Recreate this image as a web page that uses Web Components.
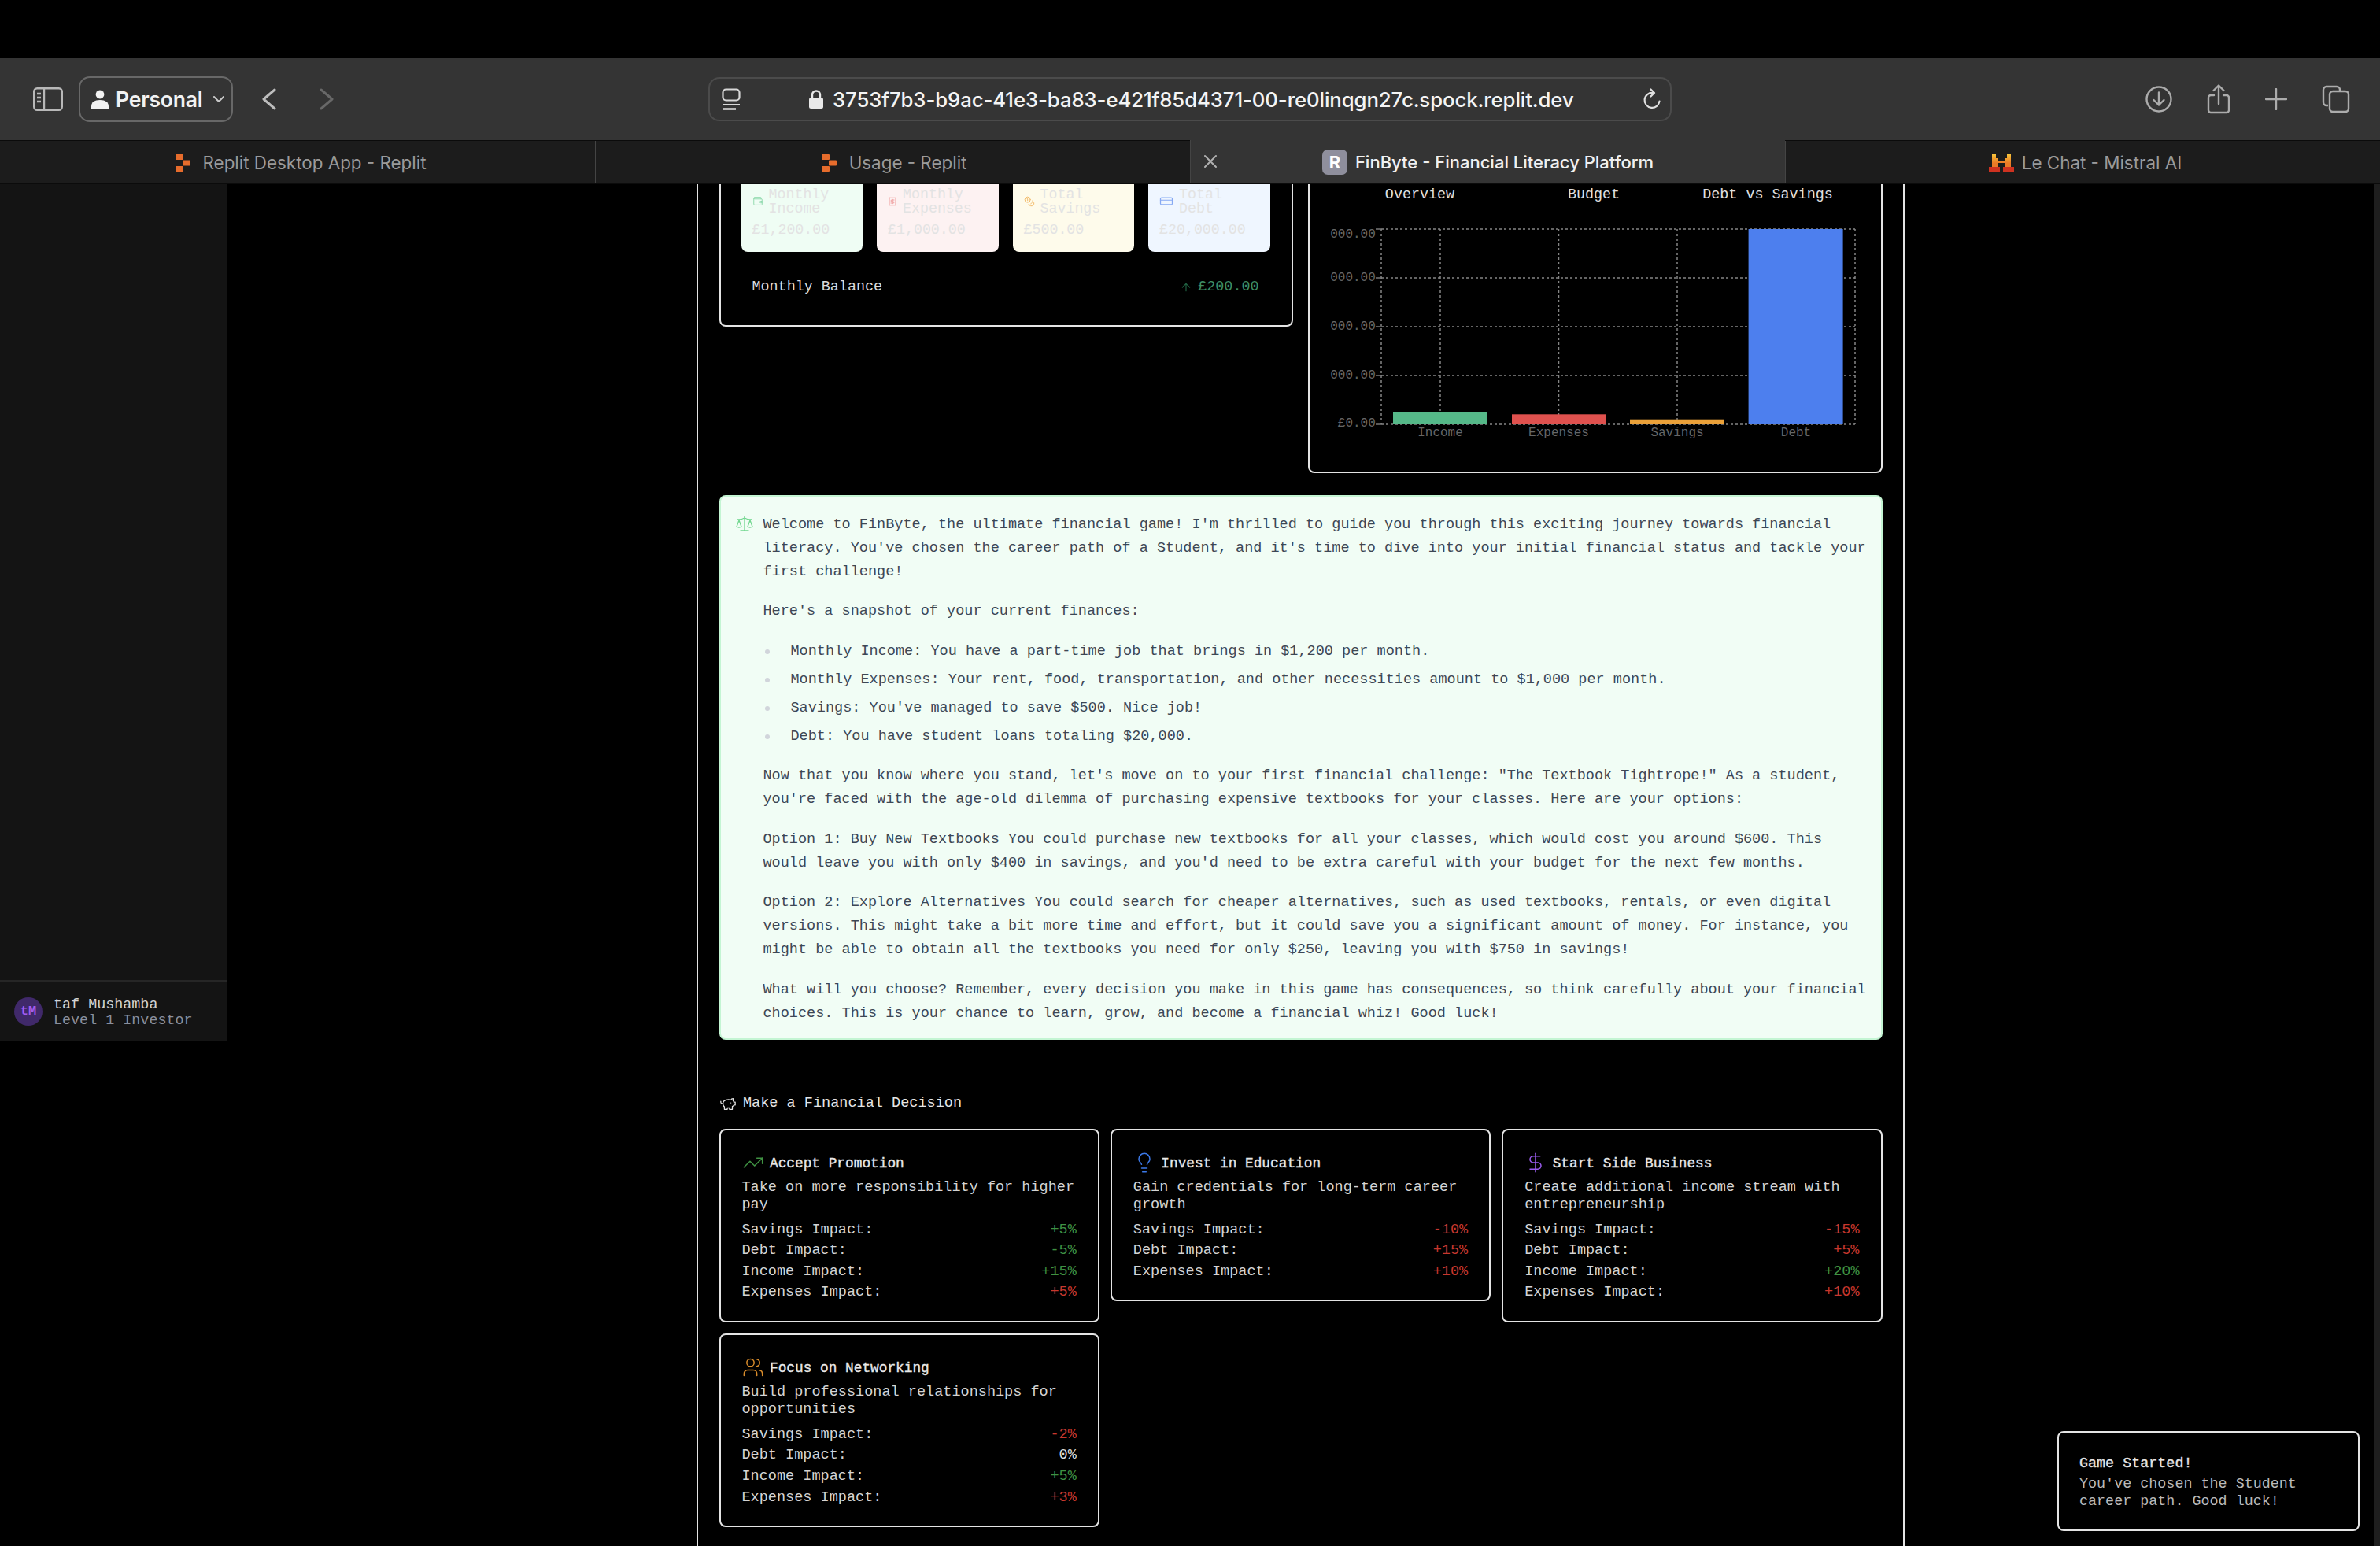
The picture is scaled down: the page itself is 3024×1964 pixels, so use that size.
<!DOCTYPE html>
<html><head><meta charset="utf-8"><style>
html,body{margin:0;padding:0;background:#000;width:3024px;height:1964px;overflow:hidden}
body{display:flex;flex-direction:column;font-family:"Liberation Mono",monospace}
</style></head><body>
<browser-chrome></browser-chrome>
<app-shell>
  <game-sidebar slot="side"></game-sidebar>
  <finance-summary></finance-summary>
  <finance-chart></finance-chart>
  <advisor-message slot="msg"></advisor-message>
  <decision-panel slot="dec"></decision-panel>
  <game-toast slot="toast"></game-toast>
</app-shell>
<script>
const ic=(body,w,h,color,sw,extra='')=>`<svg width="${w}" height="${h}" viewBox="0 0 24 24" fill="none" stroke="${color}" stroke-width="${sw}" stroke-linecap="round" stroke-linejoin="round" preserveAspectRatio="none" style="flex:none;display:block;${extra}">${body}</svg>`;
const I={
scale:'<path d="m16 16 3-8 3 8c-.87.65-1.92 1-3 1s-2.13-.35-3-1Z"/><path d="m2 16 3-8 3 8c-.87.65-1.92 1-3 1s-2.13-.35-3-1Z"/><path d="M7 21h10"/><path d="M12 3v18"/><path d="M3 7h2c2 0 5-1 7-2 2 1 5 2 7 2h2"/>',
trend:'<polyline points="22 7 13.5 15.5 8.5 10.5 2 17"/><polyline points="16 7 22 7 22 13"/>',
bulb:'<path d="M15 14c.2-1 .7-1.7 1.5-2.5 1-.9 1.5-2.2 1.5-3.5A6 6 0 0 0 6 8c0 1 .2 2.2 1.5 3.5.7.7 1.3 1.5 1.5 2.5"/><path d="M9 18h6"/><path d="M10 22h4"/>',
dollar:'<line x1="12" y1="2" x2="12" y2="22"/><path d="M17 5H9.5a3.5 3.5 0 0 0 0 7h5a3.5 3.5 0 0 1 0 7H6"/>',
users:'<path d="M16 21v-2a4 4 0 0 0-4-4H6a4 4 0 0 0-4 4v2"/><circle cx="9" cy="7" r="4"/><path d="M22 21v-2a4 4 0 0 0-3-3.87"/><path d="M16 3.13a4 4 0 0 1 0 7.75"/>',
pig:'<path d="M19 5c-1.5 0-2.8 1.4-3 2-3.5-1.5-11-.3-11 5 0 1.8 0 3 2 4.5V20h4v-2h3v2h4v-4c1-.5 1.7-1 2-2h2v-4h-2c0-1-.5-1.5-1-2V5z"/><path d="M2 9v1c0 1.1.9 2 2 2h1"/><path d="M16 11h.01"/>',
wallet:'<path d="M19 7V4a1 1 0 0 0-1-1H5a2 2 0 0 0 0 4h15a1 1 0 0 1 1 1v4h-3a2 2 0 0 0 0 4h3a1 1 0 0 0 1-1v-2a1 1 0 0 0-1-1"/><path d="M3 5v14a2 2 0 0 0 2 2h15a1 1 0 0 0 1-1v-4"/>',
receipt:'<path d="M4 2v20l2-1 2 1 2-1 2 1 2-1 2 1 2-1 2 1V2l-2 1-2-1-2 1-2-1-2 1-2-1-2 1Z"/><path d="M16 8h-6a2 2 0 1 0 0 4h4a2 2 0 1 1 0 4H8"/><path d="M12 17.5v-11"/>',
coins:'<circle cx="8" cy="8" r="6"/><path d="M18.09 10.37A6 6 0 1 1 10.34 18"/><path d="M7 6h1v4"/><path d="m16.71 13.88.7.71-2.82 2.82"/>',
card:'<rect x="2" y="5" width="20" height="14" rx="2"/><line x1="2" y1="10" x2="22" y2="10"/>',
arrow:'<path d="M12 19V5"/><path d="m5 12 7-7 7 7"/>'
};
function def(name,css,html){
  customElements.define(name,class extends HTMLElement{
    constructor(){super();const r=this.attachShadow({mode:'open'});r.innerHTML=`<style>${css}</style>${html}`;}
  });
}
const replit=`<svg width="19" height="22" viewBox="0 0 19 22" style="flex:none"><g fill="#e66c2c"><rect width="10" height="7" rx="1"/><rect x="9" y="7.5" width="10" height="7" rx="1"/><rect y="15" width="10" height="7" rx="1"/></g></svg>`;
const mistral=`<svg width="32" height="22" viewBox="0 0 32 22" style="flex:none"><defs><linearGradient id="mg" x1="0" y1="0" x2="0" y2="1"><stop offset="0" stop-color="#f6c43a"/><stop offset=".7" stop-color="#ec7a26"/></linearGradient></defs><path fill="url(#mg)" d="M4 0h5v5h3v3h8V5h3V0h5v16h-8v-5h-8v5H4z"/><rect y="16" width="14" height="6" fill="#cf3220"/><rect x="18" y="16" width="14" height="6" fill="#cf3220"/></svg>`;

def('browser-chrome',`
:host{display:block;flex:none;font-family:Inter,"Liberation Sans",sans-serif}
.top{height:74px;background:#000}
.bar{height:104px;background:#343434;display:flex;align-items:center;box-sizing:border-box}
.side{margin-left:42px}
.prof{margin-left:20px;width:196px;height:58px;box-sizing:border-box;border:2px solid #686868;border-radius:14px;display:flex;align-items:center;padding-left:14px;color:#f2f2f2;font-weight:600;font-size:26.5px;letter-spacing:-.2px;padding-bottom:1px}
.prof span{margin:0 14px 0 9px;width:110px;white-space:nowrap}
.back{margin-left:37px}.fwd{margin-left:55px}
.url{margin-left:476px;width:1224px;height:56px;box-sizing:border-box;border:2px solid #4b4b4b;border-radius:14px;display:flex;align-items:center;padding-left:15px;color:#f4f4f4;font-size:25.75px;font-weight:500;position:relative}
.url .lock{margin-left:87px}
.url .txt{margin-left:12px;white-space:nowrap;letter-spacing:-.1px}
.url .reload{margin-left:auto;margin-right:9px}
.acts{margin-left:602px;display:flex;align-items:center}
.tabs{height:56px;display:grid;grid-template-columns:repeat(4,1fr);background:#1c1c1c;box-sizing:border-box;border-top:1px solid #0b0b0b;border-bottom:2px solid #0b0b0b}
.tab{min-width:0;display:flex;align-items:center;justify-content:center;gap:16px;color:#9a9a9a;font-size:22.4px;white-space:nowrap;border-left:1px solid #444;box-sizing:border-box;position:relative;padding-top:2px}
.tab:first-child{border-left:none;padding-left:8px}
.tab.pl{padding-left:6px}
.tab.pm{padding-left:3px}
.tab.on{background:#343434;color:#f0f0f0;margin-top:-1px;font-weight:500;gap:10px;font-size:22px}
.x{position:absolute;left:16px;top:50%;margin-top:-9px}
.r{width:32px;height:32px;border-radius:7px;background:#8f8f9d;color:#fff;font-weight:700;font-size:22px;display:flex;align-items:center;justify-content:center}
`,`<div class="top"></div>
<div class="bar">
 <svg class="side" width="38" height="30" viewBox="0 0 38 30" fill="none" stroke="#b8b8b8" stroke-width="2.4"><rect x="1.2" y="1.2" width="35.6" height="27.6" rx="4"/><line x1="14" y1="1" x2="14" y2="29"/><path d="M5 8h5M5 13h5M5 18h5"/></svg>
 <div class="prof"><svg width="22" height="24" viewBox="0 0 22 24" fill="#f2f2f2" style="flex:none"><circle cx="11" cy="6" r="5.4"/><path d="M0 24v-3c0-5 4-8 11-8s11 3 11 8v3z"/></svg><span>Personal</span><svg width="14" height="8" viewBox="0 0 14 8" fill="none" stroke="#c8c8c8" stroke-width="2" stroke-linecap="round" stroke-linejoin="round" style="flex:none"><path d="M1 1l6 6 6-6"/></svg></div>
 <svg class="back" width="18" height="28" viewBox="0 0 18 28" fill="none" stroke="#bdbdbd" stroke-width="3" stroke-linecap="round" stroke-linejoin="round" style="flex:none"><path d="M16 2L2 14l14 12"/></svg>
 <svg class="fwd" width="18" height="28" viewBox="0 0 18 28" fill="none" stroke="#686868" stroke-width="3" stroke-linecap="round" stroke-linejoin="round" style="flex:none"><path d="M2 2l14 12L2 26"/></svg>
 <div class="url">
  <svg width="24" height="28" viewBox="0 0 24 28" fill="none" stroke="#d8d8d8" stroke-width="2.2" style="flex:none"><rect x="1.5" y="1.5" width="21" height="14" rx="4"/><path d="M1 21h22" stroke-width="2"/><path d="M1 26.5h17" stroke-width="2.6"/></svg>
  <svg class="lock" width="18" height="24" viewBox="0 0 18 24" style="flex:none"><path fill="none" stroke="#e8e8e8" stroke-width="2.4" d="M4 11V6.5a5 5 0 0 1 10 0V11"/><rect y="10" width="18" height="14" rx="2.5" fill="#e8e8e8"/></svg>
  <span class="txt">3753f7b3-b9ac-41e3-ba83-e421f85d4371-00-re0linqgn27c.spock.replit.dev</span>
  <svg class="reload" width="26" height="28" viewBox="0 0 26 28" fill="none" stroke="#e0e0e0" stroke-width="2.2" stroke-linecap="round" stroke-linejoin="round" style="flex:none"><path d="M21.5 16.5a9.5 9.5 0 1 1-8.5-10.5"/><path d="M10.5 1.5L15 6l-4.5 4.5"/></svg>
 </div>
 <div class="acts">
  <svg width="34" height="34" viewBox="0 0 34 34" fill="none" stroke="#acacac" stroke-width="2.4" stroke-linecap="round" stroke-linejoin="round" style="flex:none"><circle cx="17" cy="17" r="15.5"/><path d="M17 8.5v16M10.5 18l6.5 6.5 6.5-6.5"/></svg>
  <svg width="30" height="38" viewBox="0 0 30 38" fill="none" stroke="#acacac" stroke-width="2.4" stroke-linecap="round" stroke-linejoin="round" style="flex:none;margin-left:44px"><path d="M15 25V2M8.5 8L15 1.5 21.5 8"/><path d="M9 14H5a3 3 0 0 0-3 3v16a3 3 0 0 0 3 3h20a3 3 0 0 0 3-3V17a3 3 0 0 0-3-3h-4"/></svg>
  <svg width="28" height="28" viewBox="0 0 28 28" fill="none" stroke="#acacac" stroke-width="2.4" stroke-linecap="round" style="flex:none;margin-left:44px"><path d="M14 1v26M1 14h26"/></svg>
  <svg width="36" height="36" viewBox="0 0 36 36" fill="none" stroke="#acacac" stroke-width="2.4" stroke-linejoin="round" style="flex:none;margin-left:44px"><path d="M8 26H6a4 4 0 0 1-4-4V6a4 4 0 0 1 4-4h13a4 4 0 0 1 4 4v2"/><rect x="10" y="8" width="24" height="26" rx="4"/></svg>
 </div>
</div>
<div class="tabs">
 <div class="tab">${replit}<span>Replit Desktop App - Replit</span></div>
 <div class="tab pm">${replit}<span>Usage - Replit</span></div>
 <div class="tab on"><svg class="x" width="18" height="18" viewBox="0 0 18 18" stroke="#b0b0b0" stroke-width="2" stroke-linecap="round"><path d="M2 2l14 14M16 2L2 16"/></svg><div class="r">R</div><span>FinByte - Financial Literacy Platform</span></div>
 <div class="tab pl">${mistral}<span style="margin-left:-6px">Le Chat - Mistral AI</span></div>
</div>`);

def('app-shell',`
:host{display:flex;flex:1;min-height:0;background:#000;color:#e5e5e5;font:18.55px/30px "Liberation Mono",monospace;position:relative}
.side{flex:none;width:288px}
.mid{flex:1;display:flex;justify-content:center;overflow:hidden;min-width:0}
.main{width:1535px;box-sizing:border-box;border-left:2px solid #e4e4e4;border-right:2px solid #e4e4e4;padding:0 27px;height:100%;overflow:hidden}
.inner{margin-top:-50px}
.row{display:grid;grid-template-columns:729px 730px;gap:19px;align-items:start}
.sb{flex:none;width:8px;background:#1e1e1e}
`,`<div class="side"><slot name="side"></slot></div>
<div class="mid"><div class="main"><div class="inner"><div class="row"><slot></slot></div><slot name="msg"></slot><slot name="dec"></slot></div></div></div>
<div class="sb"></div><slot name="toast"></slot>`);

def('game-sidebar',`
:host{display:flex;flex-direction:column;justify-content:flex-end;height:1088px;background:#141414;box-sizing:border-box}
.u{border-top:2px solid #262626;height:77px;box-sizing:border-box;display:flex;align-items:center;padding-left:18px;gap:14px;line-height:20px;font-size:18.4px}
.t{padding-top:5px}
.a{width:36px;height:36px;border-radius:50%;background:#40296a;color:#a35cf0;display:flex;align-items:center;justify-content:center;font-size:17px;font-weight:700}
.n{color:#d4d4d4}.l{color:#8a8f9c}
`,`<div class="u"><div class="a">tM</div><div class="t"><div class="n">taf Mushamba</div><div class="l">Level 1 Investor</div></div></div>`);

const stat=(cls,icon,w,h,col,a,b,v)=>`<div class="s ${cls}"><div class="h">${ic(icon,w,h,col,1.7)}<div>${a}<br>${b}</div></div><div class="v">${v}</div></div>`;
def('finance-summary',`
:host{display:block;border:2px solid #e4e4e4;border-radius:8px;padding:34px 27px 0 26px;height:231px;box-sizing:border-box}
.g{display:grid;grid-template-columns:repeat(4,1fr);gap:18px}
.s{border-radius:8px;padding:17.5px 14px 15.5px;height:100px;box-sizing:border-box;color:#e3e3e3;font-size:18.3px}
.h{display:flex;align-items:center;gap:7px;line-height:18px}
.v{line-height:22px;margin-top:7.5px}
.gr{background:#effdf4}.re{background:#fdf2f2}.ye{background:#fefbeb}.bl{background:#eff6ff}
.b{display:flex;justify-content:space-between;align-items:center;padding:0 14px;margin-top:35px;line-height:20px;font-size:18.4px;color:#dcdcdc}
.p{display:flex;align-items:center;gap:7px;color:#3f8d65}
`,`<div class="g">
${stat('gr',I.wallet,14,13,'#8fd9ad','Monthly','Income','£1,200.00')}
${stat('re',I.receipt,12,12,'#ec8f8f','Monthly','Expenses','£1,000.00')}
${stat('ye',I.coins,14,14,'#f2bb6b','Total','Savings','£500.00')}
${stat('bl',I.card,18,15,'#86a9f3','Total','Debt','£20,000.00')}
</div><div class="b"><span>Monthly Balance</span><span class="p">${ic(I.arrow,16,16,'#1f5f40',1.8)}£200.00</span></div>`);

def('finance-chart',`
:host{display:block;border:2px solid #e4e4e4;border-radius:8px;padding:50px 0 39px 26px;box-sizing:border-box;height:417px}
.t{display:grid;grid-template-columns:repeat(3,221px);margin-left:4px;line-height:24px;font-size:18.4px;text-align:center;color:#e0e0e0}
svg{display:block;margin-top:20px}
text{font:16px "Liberation Mono",monospace;fill:#666}
.gd{stroke:#858585;stroke-width:1.5;stroke-dasharray:3 3;fill:none}
`,`<div class="t"><span>Overview</span><span>Budget</span><span>Debt vs Savings</span></div>
<svg width="680" height="280" viewBox="0 0 680 280">
<g class="gd"><path d="M65 11H667M65 73H667M65 135H667M65 197H667M65 259H667"/><path d="M65 11V259M140 11V259M290.5 11V259M441 11V259M592 11V259M667 11V259"/></g>
<path d="M58 11h7M58 73h7M58 135h7M58 197h7M58 259h7" stroke="#777" stroke-width="1.5"/>
<rect x="80" y="244" width="120" height="15" fill="#55b888"/>
<rect x="231" y="246.3" width="120" height="12.7" fill="#df514e"/>
<rect x="381" y="252.7" width="120" height="6.3" fill="#eba139"/>
<rect x="531.6" y="11" width="120" height="248" fill="#4d7fee"/>
<g text-anchor="end"><text x="57.8" y="22">000.00</text><text x="57.8" y="77">000.00</text><text x="57.8" y="139">000.00</text><text x="57.8" y="201">000.00</text><text x="57.8" y="262">£0.00</text></g>
<g text-anchor="middle"><text x="140" y="274">Income</text><text x="290.5" y="274">Expenses</text><text x="441" y="274">Savings</text><text x="592" y="274">Debt</text></g>
</svg>`);

def('advisor-message',`
:host{width:1478px;box-sizing:border-box;margin-top:28px;background:#f1fdf5;border:2px solid #c4f5d3;border-radius:8px;padding:20.5px 12px 16.5px 19px;color:#3d4755;display:flex;gap:11px;font-size:18.55px;line-height:30px}
.c{flex:1;min-width:0}
p{margin:0 0 20.5px}
p:last-child{margin:0}
ul{margin:0 0 20.5px;padding:0;list-style:none}
li{position:relative;padding-left:35px;margin-bottom:6px}
li::before{content:"";position:absolute;left:2.5px;top:12px;width:6px;height:6px;border-radius:50%;background:#d1d5db}
`,`${ic(I.scale,24,24,'#6fd68d',1.3,'margin-top:1.5px;margin-left:-1px;margin-right:1px')}<div class="c">
<p>Welcome to FinByte, the ultimate financial game! I'm thrilled to guide you through this exciting journey towards financial literacy. You've chosen the career path of a Student, and it's time to dive into your initial financial status and tackle your first challenge!</p>
<p>Here's a snapshot of your current finances:</p>
<ul><li>Monthly Income: You have a part-time job that brings in $1,200 per month.</li>
<li>Monthly Expenses: Your rent, food, transportation, and other necessities amount to $1,000 per month.</li>
<li>Savings: You've managed to save $500. Nice job!</li>
<li>Debt: You have student loans totaling $20,000.</li></ul>
<p>Now that you know where you stand, let's move on to your first financial challenge: "The Textbook Tightrope!" As a student, you're faced with the age-old dilemma of purchasing expensive textbooks for your classes. Here are your options:</p>
<p>Option 1: Buy New Textbooks You could purchase new textbooks for all your classes, which would cost you around $600. This would leave you with only $400 in savings, and you'd need to be extra careful with your budget for the next few months.</p>
<p>Option 2: Explore Alternatives You could search for cheaper alternatives, such as used textbooks, rentals, or even digital versions. This might take a bit more time and effort, but it could save you a significant amount of money. For instance, you might be able to obtain all the textbooks you need for only $250, leaving you with $750 in savings!</p>
<p>What will you choose? Remember, every decision you make in this game has consequences, so think carefully about your financial choices. This is your chance to learn, grow, and become a financial whiz! Good luck!</p>
</div>`);

const G='#3f9142',R='#c8372d',N='#dcdcdc';
const rows=a=>a.map(([k,v,c])=>`<div class="i"><span>${k}</span><span style="color:${c}">${v}</span></div>`).join('');
const cardH=(icon,col,t,d,r)=>`<div class="k"><div class="t">${ic(icon,28,28,col,1.3)}<b>${t}</b></div><div class="d">${d}</div><div class="rs">${rows(r)}</div></div>`;
def('decision-panel',`
:host{display:block;margin-top:69px;width:1478px}
.h{display:flex;align-items:center;gap:8.5px;line-height:24px;color:#e5e5e5;font-size:18.55px}
.g{display:grid;grid-template-columns:repeat(3,1fr);gap:14px;align-items:start;margin-top:20px}
.k{border:2px solid #e4e4e4;border-radius:8px;box-sizing:border-box;padding:26.5px 27px 23px 27px}
.t{display:flex;align-items:center;gap:7px;height:28px}
b{font-weight:400;-webkit-text-stroke:.35px #e8e8e8;color:#e8e8e8;font-size:17.8px;line-height:24px;padding-top:3px;margin-left:.5px}
.d{margin-top:7.5px;line-height:22px;color:#d4d4d4;font-size:18.55px}
.rs{margin-top:7.7px;margin-bottom:-1px}
.i{display:flex;justify-content:space-between;line-height:26.6px;color:#d4d4d4;font-size:18.55px}
`,`<div class="h">${ic(I.pig,22,22,'#e5e5e5',1.4)}<span>Make a Financial Decision</span></div>
<div class="g">
${cardH(I.trend,G,'Accept Promotion','Take on more responsibility for higher pay',[['Savings Impact:','+5%',G],['Debt Impact:','-5%',G],['Income Impact:','+15%',G],['Expenses Impact:','+5%',R]])}
${cardH(I.bulb,'#3b78e7','Invest in Education','Gain credentials for long-term career growth',[['Savings Impact:','-10%',R],['Debt Impact:','+15%',R],['Expenses Impact:','+10%',R]])}
${cardH(I.dollar,'#9b5cf0','Start Side Business','Create additional income stream with entrepreneurship',[['Savings Impact:','-15%',R],['Debt Impact:','+5%',R],['Income Impact:','+20%',G],['Expenses Impact:','+10%',R]])}
${cardH(I.users,'#d98c2b','Focus on Networking','Build professional relationships for opportunities',[['Savings Impact:','-2%',R],['Debt Impact:','0%',N],['Income Impact:','+5%',G],['Expenses Impact:','+3%',R]])}
</div>`);

def('game-toast',`
:host{position:absolute;left:2614px;top:1584px;width:384px;height:127px;box-sizing:border-box;border:2px solid #e4e4e4;border-radius:8px;background:#000;padding:28px 26px;font-size:18.4px;line-height:22px;color:#b9b9b9}
b{display:block;font-weight:400;-webkit-text-stroke:.35px #e5e5e5;color:#e5e5e5;line-height:24px;margin-bottom:3px}
`,`<b>Game Started!</b>You've chosen the Student<br>career path. Good luck!`);
</script>
</body></html>
